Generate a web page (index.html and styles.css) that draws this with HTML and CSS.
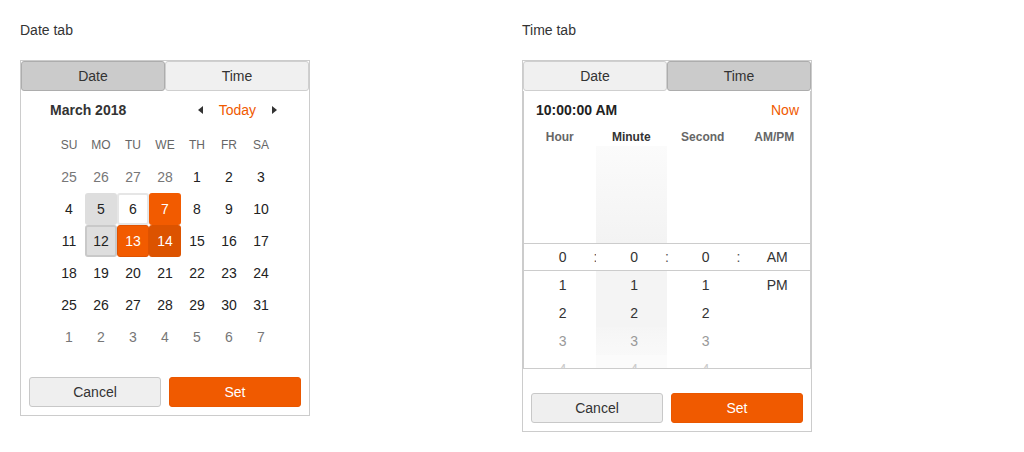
FILE: index.html
```html
<!DOCTYPE html>
<html lang="en">
<head>
<meta charset="utf-8">
<title>Date and time picker</title>
<link rel="stylesheet" href="styles.css">
</head>
<body>
<div class="page">
  <section class="demo">
    <div class="label">Date tab</div>
    <div class="picker">
      <div class="tabs">
        <div class="tab active">Date</div>
        <div class="tab">Time</div>
      </div>
      <div class="date-panel">
        <div class="cal-head">
          <span class="month">March 2018</span>
          <div class="nav">
            <span class="arrow prev"></span>
            <span class="today">Today</span>
            <span class="arrow next"></span>
          </div>
        </div>
        <div class="cal-grid">
          <span class="dow">SU</span><span class="dow">MO</span><span class="dow">TU</span><span class="dow">WE</span><span class="dow">TH</span><span class="dow">FR</span><span class="dow">SA</span>
          <span class="day other">25</span><span class="day other">26</span><span class="day other">27</span><span class="day other">28</span><span class="day">1</span><span class="day">2</span><span class="day">3</span>
          <span class="day">4</span><span class="day hover">5</span><span class="day today-cell">6</span><span class="day selected">7</span><span class="day">8</span><span class="day">9</span><span class="day">10</span>
          <span class="day">11</span><span class="day focused">12</span><span class="day range">13</span><span class="day range-end">14</span><span class="day">15</span><span class="day">16</span><span class="day">17</span>
          <span class="day">18</span><span class="day">19</span><span class="day">20</span><span class="day">21</span><span class="day">22</span><span class="day">23</span><span class="day">24</span>
          <span class="day">25</span><span class="day">26</span><span class="day">27</span><span class="day">28</span><span class="day">29</span><span class="day">30</span><span class="day">31</span>
          <span class="day other">1</span><span class="day other">2</span><span class="day other">3</span><span class="day other">4</span><span class="day other">5</span><span class="day other">6</span><span class="day other">7</span>
        </div>
      </div>
      <div class="actions">
        <button class="btn cancel">Cancel</button>
        <button class="btn set">Set</button>
      </div>
    </div>
  </section>

  <section class="demo">
    <div class="label">Time tab</div>
    <div class="picker">
      <div class="tabs">
        <div class="tab">Date</div>
        <div class="tab active">Time</div>
      </div>
      <div class="time-panel">
        <div class="time-head">
          <span class="time-value">10:00:00 AM</span>
          <span class="now">Now</span>
        </div>
        <div class="wheel-labels">
          <span>Hour</span><span class="current">Minute</span><span>Second</span><span>AM/PM</span>
        </div>
        <div class="wheel">
          <div class="wrow spacer"><span></span><i></i><span class="m"></span><i></i><span></span><i></i><span></span></div>
          <div class="wrow sel"><span>0</span><i>:</i><span class="m">0</span><i>:</i><span>0</span><i>:</i><span>AM</span></div>
          <div class="wrow"><span>1</span><i></i><span class="m">1</span><i></i><span>1</span><i></i><span>PM</span></div>
          <div class="wrow"><span>2</span><i></i><span class="m">2</span><i></i><span>2</span><i></i><span></span></div>
          <div class="wrow fade1"><span>3</span><i></i><span class="m">3</span><i></i><span>3</span><i></i><span></span></div>
          <div class="wrow fade2"><span>4</span><i></i><span class="m">4</span><i></i><span>4</span><i></i><span></span></div>
        </div>
      </div>
      <div class="actions">
        <button class="btn cancel">Cancel</button>
        <button class="btn set">Set</button>
      </div>
    </div>
  </section>
</div>
</body>
</html>
```

FILE: styles.css
```css
* { box-sizing: border-box; }

body {
  margin: 0;
  background: #fff;
  font-family: "Liberation Sans", Arial, sans-serif;
  font-size: 14px;
  color: #333;
}

.page {
  display: flex;
  align-items: flex-start;
  gap: 212px;
  padding: 20px 0 0 20px;
}

.demo { width: 290px; }

.label {
  height: 20px;
  line-height: 20px;
  margin-bottom: 20px;
  color: #333;
}

.picker {
  border: 1px solid #ccc;
  background: #fff;
}

.tabs {
  display: flex;
  height: 30px;
}

.tab {
  flex: 1;
  display: flex;
  align-items: center;
  justify-content: center;
  background: #f0f0f0;
  border: 1px solid #cfcfcf;
  border-radius: 3px;
  color: #333;
}

.tab.active {
  background: #cbcbcb;
  border-color: #adadad;
}

/* Date panel */
.cal-head {
  height: 38px;
  display: flex;
  align-items: center;
  justify-content: space-between;
  padding: 0 32px 0 29px;
}

.month { font-weight: bold; color: #333; }

.nav {
  display: flex;
  align-items: center;
  gap: 16px;
}

.arrow {
  width: 0;
  height: 0;
  border-top: 4px solid transparent;
  border-bottom: 4px solid transparent;
}
.arrow.prev { border-right: 5px solid #333; }
.arrow.next { border-left: 5px solid #333; }

.today { color: #f05a00; }

.cal-grid {
  width: 224px;
  margin: 0 auto;
  display: grid;
  grid-template-columns: repeat(7, 32px);
  grid-auto-rows: 32px;
}

.dow {
  display: flex;
  align-items: center;
  justify-content: center;
  font-size: 12px;
  color: #666;
}

.day {
  display: flex;
  align-items: center;
  justify-content: center;
  border-radius: 3px;
  color: #222;
}

.day.other { color: #777; }
.day.hover { background: #dedede; }
.day.today-cell { border: 2px solid #e6e6e6; background: #fff; }
.day.selected { background: #f25b00; color: #fff; }
.day.focused { background: #dedede; border: 2px solid #c9c9c9; }
.day.range { background: #f25b00; border: 1px solid #e05200; color: #fff; }
.day.range-end { background: #dc5300; color: #fff; }

.actions {
  display: flex;
  gap: 8px;
  padding: 0 8px 8px;
  margin-top: 24px;
}

.btn {
  flex: 1;
  height: 30px;
  border-radius: 3px;
  font-family: inherit;
  font-size: 14px;
  padding: 0;
}

.btn.cancel {
  background: #efefef;
  border: 1px solid #c8c8c8;
  color: #333;
}

.btn.set {
  background: #f05a00;
  border: 1px solid #ea5700;
  color: #fff;
}

/* Time panel */
.time-panel {
  border: 1px solid #ccc;
  border-top: none;
}

.time-head {
  height: 37px;
  display: flex;
  align-items: center;
  justify-content: space-between;
  padding: 0 11px 0 12px;
}

.time-value { font-weight: bold; color: #222; }
.now { color: #f05a00; }

.wheel-labels {
  display: grid;
  grid-template-columns: repeat(4, 1fr);
  height: 18px;
  align-items: center;
  font-size: 12px;
  font-weight: bold;
  color: #666;
  text-align: center;
}
.wheel-labels .current { color: #333; }

.wheel {
  height: 222px;
  overflow: hidden;
}

.wrow {
  display: grid;
  grid-template-columns: 1fr 0 1fr 0 1fr 0 1fr;
  height: 28px;
  color: #333;
}

.wrow span {
  display: flex;
  align-items: center;
  justify-content: center;
  padding-left: 6px;
}

.wrow i {
  font-style: normal;
  display: flex;
  align-items: center;
  justify-content: center;
  overflow: visible;
  color: #555;
  width: 0;
}

.wrow .m { background: #f4f4f4; }

.wrow.spacer { height: 97px; }
.wrow.spacer .m { background: linear-gradient(to bottom, #fbfbfb, #f3f3f3); }

.wrow.sel {
  border-top: 1px solid #ccc;
  border-bottom: 1px solid #ccc;
}
.wrow.sel .m { background: #fff; }

.wrow.fade1 { color: #999; }
.wrow.fade1 .m { background: linear-gradient(to bottom, #f5f5f5, #f9f9f9); }
.wrow.fade2 { color: #ccc; }
.wrow.fade2 .m { background: #fbfbfb; }
```
